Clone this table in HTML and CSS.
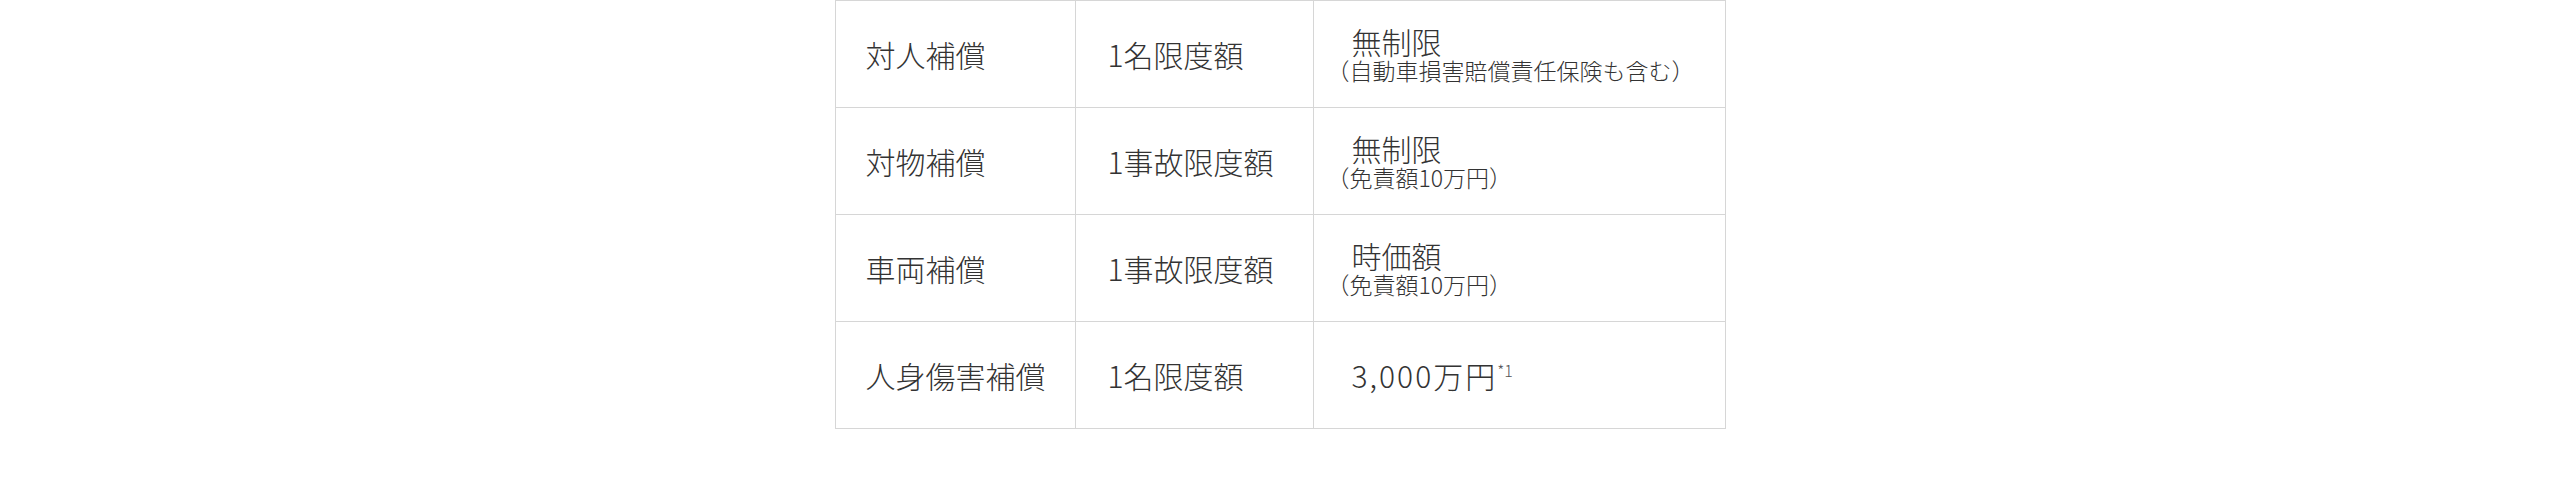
FILE: index.html
```html
<!DOCTYPE html>
<html lang="ja">
<head>
<meta charset="utf-8">
<title>補償内容</title>
<link rel="stylesheet" href="styles.css">
</head>
<body>
<table class="coverage">
  <colgroup>
    <col class="c-name">
    <col class="c-limit">
    <col class="c-amount">
  </colgroup>
  <tbody>
    <tr>
      <td class="name">対人補償</td>
      <td class="limit">1名限度額</td>
      <td class="amount"><span class="main">無制限</span><span class="note">（自動車損害賠償責任保険も含む）</span></td>
    </tr>
    <tr>
      <td class="name">対物補償</td>
      <td class="limit">1事故限度額</td>
      <td class="amount"><span class="main">無制限</span><span class="note">（免責額10万円）</span></td>
    </tr>
    <tr>
      <td class="name">車両補償</td>
      <td class="limit">1事故限度額</td>
      <td class="amount"><span class="main">時価額</span><span class="note">（免責額10万円）</span></td>
    </tr>
    <tr>
      <td class="name">人身傷害補償</td>
      <td class="limit">1名限度額</td>
      <td class="amount"><span class="main wide">3,000万円<sup class="mark">*1</sup></span></td>
    </tr>
  </tbody>
</table>
</body>
</html>
```

FILE: styles.css
```css
html, body {
  margin: 0;
  padding: 0;
  background: #ffffff;
}

body {
  font-family: "Noto Sans CJK JP", "Noto Sans", sans-serif;
  font-weight: 300;
  color: #333333;
}

.coverage {
  width: 890px;
  margin: 0 auto;
  border-collapse: collapse;
  table-layout: fixed;
}

.c-name { width: 240px; }
.c-limit { width: 238px; }
.c-amount { width: 412px; }

.coverage td {
  border: 1px solid #d6d6d6;
  height: 107px;
  padding: 0;
  vertical-align: middle;
  font-size: 30px;
  line-height: 36px;
  box-sizing: border-box;
}

.coverage td.name {
  padding-left: 30px;
}

.coverage td.limit {
  padding-left: 32px;
}

.coverage td.amount {
  padding-left: 13px;
}

.main {
  display: block;
  padding-left: 25px;
  font-size: 30px;
  line-height: 32px;
}

.main.wide {
  letter-spacing: 2px;
}

.note {
  display: block;
  font-size: 23px;
  line-height: 26px;
}

.mark {
  font-size: 16px;
  line-height: 1;
  letter-spacing: 0;
  color: #555555;
  vertical-align: top;
  position: relative;
  top: 3px;
  margin-left: 0;
}
```
